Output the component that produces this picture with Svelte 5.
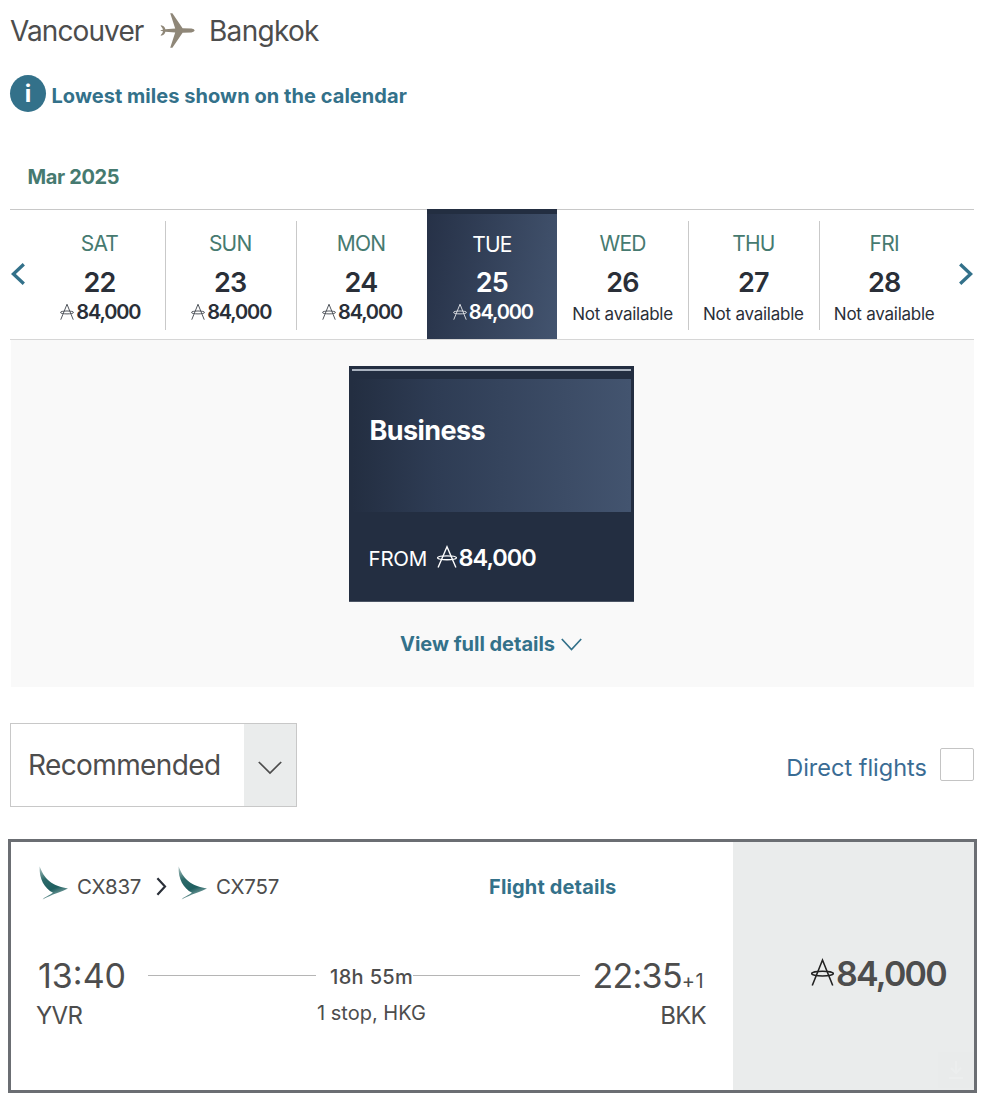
<script lang="ts">
	interface Day {
		name: string;
		date: number;
		miles: string | null;
	}

	const days: Day[] = [
		{ name: 'SAT', date: 22, miles: '84,000' },
		{ name: 'SUN', date: 23, miles: '84,000' },
		{ name: 'MON', date: 24, miles: '84,000' },
		{ name: 'TUE', date: 25, miles: '84,000' },
		{ name: 'WED', date: 26, miles: null },
		{ name: 'THU', date: 27, miles: null },
		{ name: 'FRI', date: 28, miles: null }
	];

	const legs = ['CX837', 'CX757'];

	let selected = $state(25);
	let directOnly = $state(false);
</script>

{#snippet milesIcon()}
	<svg class="miles-icon" viewBox="0 0 22 27" preserveAspectRatio="none" aria-hidden="true">
		<path d="M1.2 26.5 L11 2 L20.8 26.5" />
		<ellipse cx="11" cy="15" rx="10.4" ry="2.3" />
	</svg>
{/snippet}

<main class="page">
	<div class="route">
		<span class="origin">Vancouver</span>
		<svg class="plane" width="35" height="35" viewBox="0 0 35 35">
			<path d="M10.2 0.3 H12.4 L22.6 15.2 L31.5 15.6 Q34.6 16.2 34.7 17.5 Q34.6 18.8 31.5 19.4 L22.6 19.8 L12.4 34.7 H10.2 L15.2 19.6 L5.4 18.8 Q4.6 22.4 1 22.8 Q0.2 22.6 1.2 21.6 Q2.8 20 3 18.3 L0.6 17.8 V17.2 L3 16.7 Q2.8 15 1.2 13.4 Q0.2 12.4 1 12.2 Q4.6 12.6 5.4 16.2 L15.2 15.4 Z" />
		</svg>
		<span>Bangkok</span>
	</div>

	<div class="notice">
		<span class="info">i</span>
		<span class="notice-text">Lowest miles shown on the calendar</span>
	</div>

	<div class="month">Mar 2025</div>

	<div class="calendar">
		<button class="nav prev" aria-label="Previous dates">
			<svg width="14" height="22" viewBox="0 0 14 22"><path d="M12.8 1.2 L2.4 11 L12.8 20.8" /></svg>
		</button>
		<div class="days">
			{#each days as day (day.date)}
				<button class="day" class:selected={day.date === selected} onclick={() => (selected = day.date)}>
					<span class="day-name">{day.name}</span>
					<span class="day-date">{day.date}</span>
					{#if day.miles}
						<span class="day-miles">{@render milesIcon()}{day.miles}</span>
					{:else}
						<span class="day-none">Not available</span>
					{/if}
				</button>
			{/each}
		</div>
		<button class="nav next" aria-label="Next dates">
			<svg width="14" height="22" viewBox="0 0 14 22"><path d="M1.2 1.2 L11.6 11 L1.2 20.8" /></svg>
		</button>
	</div>

	<section class="cabins">
		<div class="cabin">
			<div class="cabin-line"></div>
			<div class="cabin-name">Business</div>
			<div class="cabin-fare">
				<span class="from">FROM</span>
				<span class="fare">{@render milesIcon()}84,000</span>
			</div>
		</div>
		<a class="full-details" href="#details">
			View full details
			<svg width="21" height="13" viewBox="0 0 21 13"><path d="M0.8 1 L10.5 11.6 L20.2 1" /></svg>
		</a>
	</section>

	<div class="filters">
		<button class="sort">
			<span class="sort-label">Recommended</span>
			<span class="sort-arrow">
				<svg width="24" height="14" viewBox="0 0 24 14"><path d="M0.8 1 L12 12 L23.2 1" /></svg>
			</span>
		</button>
		<label class="direct">
			Direct flights
			<input type="checkbox" bind:checked={directOnly} />
		</label>
	</div>

	<article class="flight">
		<div class="flight-main">
			<div class="legs">
				{#each legs as leg, i (leg)}
					{#if i > 0}
						<svg class="leg-arrow" width="11" height="19" viewBox="0 0 11 19"><path d="M1.4 1.2 L9 9.5 L1.4 17.8" /></svg>
					{/if}
					<svg class="brand" width="29" height="34" viewBox="0 0 29 34">
						<defs>
							<linearGradient id="wing-{i}" x1="0" y1="0" x2="0.35" y2="1">
								<stop offset="0" stop-color="#b5c9c8" />
								<stop offset="0.4" stop-color="#2c6a69" />
								<stop offset="0.75" stop-color="#1f5f60" />
								<stop offset="1" stop-color="#7fa3a2" />
							</linearGradient>
						</defs>
						<path d="M0.6 0.3 C4 9 9 19.5 29 22.5 C24 25.2 12 28.6 3.6 33.6 C5 31.4 11 29 14 26.8 C5.5 22.5 0 13 0.6 0.3 Z" fill="url(#wing-{i})" />
					</svg>
					<span class="leg">{leg}</span>
				{/each}
				<a class="flight-details" href="#flight">Flight details</a>
			</div>

			<div class="itinerary">
				<div class="stop">
					<div class="time">13:40</div>
					<div class="airport">YVR</div>
				</div>
				<div class="journey">
					<div class="duration">
						<span class="line first"></span>
						<span class="duration-text">18h 55m</span>
						<span class="line last"></span>
					</div>
					<div class="stops">1 stop, HKG</div>
				</div>
				<div class="stop arrival">
					<div class="time">22:35<span class="plus">+1</span></div>
					<div class="airport">BKK</div>
				</div>
			</div>
		</div>
		<div class="flight-price">
			<span class="price">{@render milesIcon()}84,000</span>
			<span class="download">
				<svg width="16" height="20" viewBox="0 0 16 20"><path d="M8 1 V12 M3 8 L8 13 L13 8 M1 18 H15" /></svg>
			</span>
		</div>
	</article>
</main>

<style>
	:global(body) {
		margin: 0;
		background: #fff;
	}

	.page {
		box-sizing: border-box;
		width: 994px;
		height: 1104px;
		padding: 14px 20px 0 10px;
		overflow: hidden;
		font-family: Inter, 'Liberation Sans', sans-serif;
		color: #4d4d4d;
	}

	button {
		padding: 0;
		border: 0;
		background: none;
		font: inherit;
		color: inherit;
	}

	a {
		text-decoration: none;
	}

	svg {
		display: block;
		flex: none;
		fill: none;
	}

	.miles-icon {
		width: 14px;
		height: 17px;
		stroke: currentColor;
		stroke-width: 1.5;
	}

	.route {
		display: flex;
		height: 34px;
		line-height: 34px;
		font-size: 28px;
		font-weight: 430;
		letter-spacing: -0.7px;
	}

	.origin {
		width: 150px;
		letter-spacing: -0.9px;
	}

	.plane {
		margin: -1px 14px 0 0;
		fill: #8f8778;
	}

	.notice {
		display: flex;
		align-items: center;
		height: 37px;
		margin-top: 27px;
		color: #33718a;
		font-size: 20px;
		font-weight: 650;
		line-height: 24px;
		letter-spacing: 0.05px;
	}

	.info {
		width: 36px;
		height: 37px;
		margin-right: 5.5px;
		border-radius: 50%;
		background: #33718a;
		color: #fff;
		font-size: 24px;
		line-height: 38px;
		text-align: center;
	}

	.notice-text {
		padding-top: 4px;
	}

	.month {
		margin: 53px 0 20px 17.5px;
		color: #467a70;
		font-size: 20px;
		font-weight: 650;
		line-height: 24px;
		letter-spacing: -0.35px;
	}

	.calendar {
		display: flex;
		box-sizing: border-box;
		height: 131px;
		border-top: 1px solid #c8c8c8;
		border-bottom: 1px solid #d6d6d6;
	}

	.nav {
		display: flex;
		align-items: center;
		width: 25px;
		padding: 0 0 1px 1px;
	}

	.next {
		justify-content: flex-end;
		width: 22px;
		padding-right: 1px;
	}

	.nav svg {
		stroke: #33718a;
		stroke-width: 3.3;
	}

	.days {
		display: grid;
		flex: 1;
		grid-template-columns: repeat(7, 130.8px);
	}

	.day {
		display: flex;
		flex-direction: column;
		align-items: center;
		padding: 21px 2px 0 0;
		color: #2a2f38;
		background: linear-gradient(#c9c9c9, #c9c9c9) no-repeat 100% 11px / 1px 109px;
	}

	.day:nth-child(3),
	.day:last-child {
		background: none;
	}

	.day.selected {
		width: 130px;
		margin-top: -1px;
		padding: 18px 1px 0 0;
		border-top: 5px solid #232e41;
		background: linear-gradient(100deg, #263147, #43546f);
		color: #fff;
	}

	.day-name {
		color: #467a70;
		font-size: 21px;
		line-height: 26px;
		letter-spacing: -0.8px;
	}

	.selected .day-name {
		margin-bottom: -1px;
		color: #fff;
	}

	.day-date {
		margin-top: 10px;
		font-size: 27px;
		font-weight: 600;
		line-height: 32px;
		letter-spacing: -0.8px;
	}

	.day-miles {
		display: flex;
		align-items: center;
		gap: 2px;
		margin-top: 1px;
		padding-left: 2px;
		font-size: 20px;
		font-weight: 600;
		line-height: 24px;
		letter-spacing: -1.13px;
	}

	.day-miles .miles-icon {
		margin-top: -2px;
		opacity: 0.85;
	}

	.day-none {
		margin-top: 3px;
		font-size: 17px;
		line-height: 24px;
		letter-spacing: -0.25px;
	}

	.cabins {
		display: flex;
		flex-direction: column;
		align-items: center;
		box-sizing: border-box;
		height: 347px;
		margin-left: 1px;
		padding-top: 26px;
		background: #f9f9f9;
	}

	.cabin {
		box-sizing: border-box;
		width: 285px;
		height: 236px;
		margin-right: 3px;
		padding: 3px 3px 0;
		border-bottom: 1px solid #4c5565;
		background: #232e41;
		color: #fff;
	}

	.cabin-line {
		height: 2px;
		background: #aab3c0;
	}

	.cabin-name {
		box-sizing: border-box;
		height: 133px;
		margin-top: 8px;
		padding: 35px 0 0 18px;
		background: linear-gradient(90deg, #232e41, #2e3c54 30%, #43546f);
		font-size: 27px;
		font-weight: 700;
		line-height: 33px;
		letter-spacing: -0.59px;
	}

	.cabin-fare {
		display: flex;
		align-items: center;
		height: 28px;
		margin-top: 32px;
		padding-left: 17px;
	}

	.from {
		width: 68px;
		padding-top: 1px;
		font-size: 20.5px;
		letter-spacing: -0.22px;
	}

	.fare {
		display: flex;
		align-items: center;
		gap: 2px;
		font-size: 23.5px;
		font-weight: 600;
		line-height: 28px;
		letter-spacing: -1px;
	}

	.fare .miles-icon {
		width: 20px;
		height: 23px;
		margin-top: -3px;
	}

	.full-details {
		display: flex;
		align-items: center;
		gap: 6px;
		margin: 30px 3px 0 0;
		color: #33718a;
		font-size: 20px;
		font-weight: 700;
		line-height: 24px;
		letter-spacing: -0.02px;
	}

	.full-details svg {
		stroke: #33718a;
		stroke-width: 1.7;
	}

	.filters {
		display: flex;
		justify-content: space-between;
		margin-top: 36px;
	}

	.sort {
		display: flex;
		box-sizing: border-box;
		width: 287px;
		height: 84px;
		border: 1px solid #c8c8c8;
	}

	.sort-label {
		flex: 1;
		padding: 24px 0 0 17px;
		font-size: 28px;
		font-weight: 430;
		line-height: 34px;
		letter-spacing: -0.62px;
		text-align: left;
	}

	.sort-arrow {
		display: flex;
		align-items: center;
		justify-content: center;
		width: 52px;
		padding-top: 6px;
		background: #eaecec;
	}

	.sort-arrow svg {
		stroke: #4d4d4d;
		stroke-width: 1.7;
	}

	.direct {
		display: flex;
		align-items: flex-start;
		margin-top: 25px;
		color: #3a6c94;
		font-size: 23.5px;
		line-height: 40px;
		letter-spacing: 0;
	}

	.direct input {
		box-sizing: border-box;
		width: 34px;
		height: 33px;
		margin: 0 0 0 13px;
		border: 1px solid #c4c4c4;
		border-radius: 2px;
		background: #fff;
		appearance: none;
	}

	.flight {
		display: flex;
		box-sizing: border-box;
		width: 969px;
		height: 254px;
		margin: 32px 0 0 -2px;
		border: 3px solid #6b6e73;
	}

	.flight-main {
		width: 722px;
		padding-top: 24px;
	}

	.legs {
		display: flex;
		align-items: center;
		height: 34px;
		padding-left: 28px;
	}

	.leg {
		width: 65px;
		margin: 8px 0 0 9px;
		font-size: 20.5px;
		line-height: 26px;
		letter-spacing: -0.25px;
	}

	.leg-arrow {
		margin: 7px 11px 0 14px;
		stroke: #2a2f38;
		stroke-width: 2.2;
	}

	.flight-details {
		margin: 8px 0 0 208px;
		color: #33718a;
		font-size: 20px;
		font-weight: 650;
		line-height: 24px;
		letter-spacing: 0.15px;
	}

	.itinerary {
		display: grid;
		grid-template-columns: 111px 432px 126px;
		padding: 55px 0 0 26px;
	}

	.time {
		height: 41px;
		padding-left: 1px;
		font-size: 34px;
		line-height: 41px;
	}

	.airport {
		margin-top: 5px;
		margin-left: -1px;
		font-size: 24px;
		line-height: 29px;
		letter-spacing: -0.7px;
	}

	.arrival {
		text-align: right;
	}

	.arrival .time {
		padding-right: 2px;
		letter-spacing: -0.74px;
	}

	.plus {
		font-size: 20px;
		letter-spacing: 0.4px;
	}

	.journey {
		padding-top: 10px;
		line-height: 24px;
		font-size: 20px;
	}

	.duration {
		display: flex;
		align-items: center;
		height: 24px;
	}

	.line {
		height: 1px;
		margin-bottom: 3px;
		background: #b5b5b5;
	}

	.first {
		width: 168px;
		margin-right: 14px;
	}

	.last {
		flex: 1;
	}

	.duration-text {
		font-weight: 550;
		letter-spacing: 0.35px;
	}

	.stops {
		margin: 12px 0 0 169px;
	}

	.flight-price {
		position: relative;
		display: flex;
		flex: 1;
		justify-content: flex-end;
		padding: 111px 28px 0 0;
		background: #eaecec;
	}

	.price {
		display: flex;
		align-items: center;
		gap: 2px;
		height: 41px;
		font-size: 34px;
		font-weight: 600;
		letter-spacing: -1.74px;
	}

	.price .miles-icon {
		width: 23px;
		height: 28px;
		margin-top: -4px;
		stroke: #222;
	}

	/* barely visible overlay control in the corner of the price box */
	.download {
		position: absolute;
		right: 0;
		bottom: 2px;
		display: flex;
		align-items: center;
		justify-content: center;
		width: 36px;
		height: 36px;
		background: #e9ebeb;
	}

	.download svg {
		stroke: #eceeee;
		stroke-width: 2;
	}
</style>
